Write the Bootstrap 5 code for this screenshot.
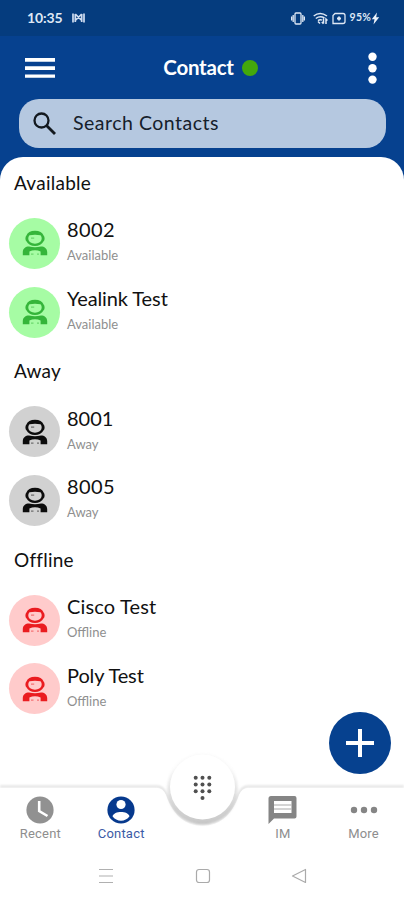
<!DOCTYPE html>
<html lang="en">
<head>
<meta charset="utf-8">
<meta name="viewport" content="width=device-width, initial-scale=1">
<title>Contact</title>
<link rel="stylesheet" href="https://cdn.jsdelivr.net/npm/bootstrap@5.3.0/dist/css/bootstrap.min.css">
<style>
body{font-family:Lato,"Open Sans",sans-serif;color:#111;background:#fff}
svg{display:block;flex:none}
.phone{width:404px;height:900px;background:#06418f}
.statusbar{height:36px;background:#053c7e;color:#dfe8f5;padding:0 24px 0 27px}
.clock{font-size:14px;letter-spacing:-.1px;font-weight:700;line-height:36px}
.batt{font-size:10.5px;font-weight:700;letter-spacing:.2px}
.topbar{height:63px;padding:0 24px 0 25px}
.title{font-size:20.5px;font-weight:700;letter-spacing:-.25px;line-height:24px;margin-top:-2px}
.title-group{margin-right:-1px}
.dot{width:16px;height:16px;background:#43a80b}
.searchbox{height:49px;margin:0 18px 9px 19px;border-radius:20px;background:#b5c8e0;padding-left:13px;gap:16px;color:#15202b}
.searchtext{font-size:19.5px;letter-spacing:.5px;margin-top:-2px}
.sheet{border-radius:23px 23px 0 0;padding-top:1px}
.group-head{height:51.2px;padding-left:14px;font-size:19px;letter-spacing:.25px;line-height:49px}
.contact{height:68.6px;padding-left:9px;gap:7px}
.avatar{width:51px;height:51px}
.avail{background:#a6fca4;color:#35b53a}
.away{background:#d1d1d1;color:#0c0c0c}
.offl{background:#ffcbcb;color:#ea1c20}
.nm{font-size:20px;line-height:26px;margin-top:-6px}
.num{letter-spacing:.4px}
.ci{letter-spacing:.15px}
.yl{letter-spacing:-.1px}
.st{font-size:13px;line-height:18px;color:#8f8f8f;margin-top:4px}
.fab{width:62px;height:62px;right:13px;top:712px;background:#06418f}
.dock{top:740px;height:160px}
.dock-shape{left:0;top:0}
.tabs{height:64px;margin-top:47px;font-family:Roboto,sans-serif;font-size:13px;letter-spacing:.2px;color:#8e8e8e}
.tab{width:20%;padding-top:9px;line-height:16px}
.tab span{margin-top:2px}
.tab svg{height:28px}
.on{color:#3c5ba6}
.sysnav{height:49px;padding:0 97px 0 98px}
</style>
<script src="https://cdn.jsdelivr.net/npm/bootstrap@5.3.0/dist/js/bootstrap.bundle.min.js"></script>
</head>
<body>
<svg width="0" height="0" class="position-absolute">
 <symbol id="person" viewBox="0 0 26 26">
  <path fill="currentColor" fill-rule="evenodd" d="M13 .8C17.500 .8 20.500 2.600 21.600 5.500Q22.600 6.500 22.600 8.500T21.600 11.200C20 14.400 17 16 13 16S6 14.400 4.400 11.200Q3.400 10.500 3.400 8.500T4.400 5.500C5.500 2.600 8.500 .8 13 .8ZM7.500 5.300C5.300 7.300 5.600 13.700 13 13.700S20.700 7.300 18.500 5.300Q13 4.300 7.500 5.300Z"/>
  <path fill="currentColor" d="M.8 25.200V22C1 18.500 3.500 16.600 7 16.600Q13 18 19 16.600C22.500 16.600 25 18.500 25.200 22V25.200H18.600V21.600Q16 20.300 13 20.300T7.400 21.600V25.200Z"/>
  <path d="M9 8.200h3.200M9 24.200h2.500M15 24.200h2" stroke="currentColor" stroke-width="1.200" opacity=".5"/>
 </symbol>
</svg>
<main class="phone position-relative overflow-hidden d-flex flex-column">
 <div class="statusbar d-flex align-items-center">
  <span class="clock">10:35</span>
  <svg class="ms-2" width="15" height="12" viewBox="0 0 15 12" fill="none" stroke="#cfdcf0" stroke-width="1.700"><path d="M2 1.500v9M13 1.500v9M4.300 2v8M10.700 2v8M4.300 2l6.400 6.500M10.700 2l-6.400 6.500"/></svg>
  <div class="d-flex align-items-center ms-auto">
   <svg width="14" height="13" viewBox="0 0 14 13" fill="none" stroke="#dfe8f5" stroke-width="1.300"><rect x="4" y="1" width="6" height="11" rx="1"/><path d="M2.200 3v7M11.800 3v7M.6 4.500v4M13.400 4.500v4"/></svg>
   <svg class="mx-1 ms-2" width="15" height="13" viewBox="0 0 15 13" fill="none" stroke="#dfe8f5" stroke-width="1.500"><path d="M.7 4Q7 -1 14 4M2.800 6.500Q7 3.500 11.500 6M5 8.700q2-1.500 4-.5M7 11.500l-2-2M10.500 6.500v5M8.800 10l1.700 1.700M13 12V7l1.500 1.500"/></svg>
   <svg width="14" height="13" viewBox="0 0 14 13" fill="none" stroke="#dfe8f5" stroke-width="1.300"><path d="M3 1.500h8Q13 1.500 13 3.500v6q0 2-2 2H1v-8Z"/><path d="M7 4.500v4M5 6.500h4" stroke-width="1.800"/></svg>
   <span class="batt ps-1">95%</span>
   <svg width="9" height="13" viewBox="0 0 9 13" fill="#eef3fb"><path d="M6 .5.8 7.300h2.700L2.500 12.500 8.200 5.300H5.200Z"/></svg>
  </div>
 </div>
 <header class="topbar d-flex align-items-center justify-content-between text-white">
  <svg width="30" height="22" viewBox="0 0 30 22" fill="#fff"><path d="M0 1h30v3.800H0zM0 9.300h30v3.800H0zM0 17.400h30v3.400H0z"/></svg>
  <div class="title-group d-flex align-items-center gap-2"><span class="title">Contact</span><span class="dot rounded-circle"></span></div>
  <svg width="15" height="32" viewBox="0 0 15 32" fill="#fff"><circle cx="7.500" cy="4.800" r="4.200"/><circle cx="7.500" cy="16.200" r="4.200"/><circle cx="7.500" cy="27.600" r="4.200"/></svg>
 </header>
 <div class="searchbox d-flex align-items-center">
  <svg width="25" height="25" viewBox="0 0 25 25" fill="none" stroke="#13191f" stroke-width="2.300"><circle cx="9.500" cy="9.500" r="7"/><path d="m14.500 14.500 8.500 8.500" stroke-width="2.800"/></svg>
  <span class="searchtext">Search Contacts</span>
 </div>
 <section class="sheet bg-white flex-grow-1">
  <div class="group-head">Available</div>
  <div class="contact d-flex align-items-center"><div class="avatar avail rounded-circle d-flex align-items-center justify-content-center"><svg width="26" height="26"><use href="#person"/></svg></div><div><div class="nm num">8002</div><div class="st">Available</div></div></div>
  <div class="contact d-flex align-items-center"><div class="avatar avail rounded-circle d-flex align-items-center justify-content-center"><svg width="26" height="26"><use href="#person"/></svg></div><div><div class="nm yl">Yealink Test</div><div class="st">Available</div></div></div>
  <div class="group-head">Away</div>
  <div class="contact d-flex align-items-center"><div class="avatar away rounded-circle d-flex align-items-center justify-content-center"><svg width="26" height="26"><use href="#person"/></svg></div><div><div class="nm">8001</div><div class="st">Away</div></div></div>
  <div class="contact d-flex align-items-center"><div class="avatar away rounded-circle d-flex align-items-center justify-content-center"><svg width="26" height="26"><use href="#person"/></svg></div><div><div class="nm num">8005</div><div class="st">Away</div></div></div>
  <div class="group-head">Offline</div>
  <div class="contact d-flex align-items-center"><div class="avatar offl rounded-circle d-flex align-items-center justify-content-center"><svg width="26" height="26"><use href="#person"/></svg></div><div><div class="nm ci">Cisco Test</div><div class="st">Offline</div></div></div>
  <div class="contact d-flex align-items-center"><div class="avatar offl rounded-circle d-flex align-items-center justify-content-center"><svg width="26" height="26"><use href="#person"/></svg></div><div><div class="nm yl">Poly Test</div><div class="st">Offline</div></div></div>
 </section>
 <div class="fab position-absolute rounded-circle d-flex align-items-center justify-content-center"><svg width="28" height="28" viewBox="0 0 28 28" stroke="#fff" stroke-width="4"><path d="M14 0v28M0 14h28"/></svg></div>
 <nav class="dock position-absolute start-0 w-100">
  <svg class="dock-shape position-absolute" width="404" height="100" viewBox="0 0 404 100">
   <defs><filter id="soft" x="-10%" y="-30%" width="120%" height="160%"><feGaussianBlur stdDeviation="1"/></filter>
   <linearGradient id="rim" x1="0" y1="0" x2="0" y2="1"><stop offset=".2" stop-color="#aaa" stop-opacity=".08"/><stop offset=".75" stop-color="#aaa" stop-opacity=".5"/><stop offset="1" stop-color="#aaa" stop-opacity=".65"/></linearGradient></defs>
   <path d="M0 46.500H157Q163 46.500 166 54C173 74 185 84 202.500 84S232 74 239 54Q242 46.500 248 46.500H404" fill="none" stroke="#dedede" stroke-width="2.200" filter="url(#soft)"/>
   <path d="M0 48H157Q163 48 166 55C173 75 185 86 202.500 86S232 75 239 55Q242 48 248 48H404V100H0Z" fill="#fff"/>
   <circle cx="202.500" cy="49" r="35.300" fill="url(#rim)" filter="url(#soft)"/>
   <circle cx="202.500" cy="47" r="32.500" fill="#fff"/>
   <g fill="#505050"><circle cx="195.700" cy="37.700" r="2"/><circle cx="202.500" cy="37.700" r="2"/><circle cx="209.300" cy="37.700" r="2"/><circle cx="195.700" cy="44.500" r="2"/><circle cx="202.500" cy="44.500" r="2"/><circle cx="209.300" cy="44.500" r="2"/><circle cx="195.700" cy="51.300" r="2"/><circle cx="202.500" cy="51.300" r="2"/><circle cx="209.300" cy="51.300" r="2"/><circle cx="202.500" cy="58" r="2"/></g>
  </svg>
  <div class="tabs d-flex position-relative">
   <div class="tab d-flex flex-column align-items-center"><svg width="28" viewBox="0 0 28 28"><circle cx="14" cy="14" r="13.600" fill="#919191"/><path d="M13.200 5v10l8.300 5" fill="none" stroke="#fff" stroke-width="2.600"/></svg><span>Recent</span></div>
   <div class="tab on d-flex flex-column align-items-center"><svg width="28" viewBox="0 0 28 28"><circle cx="14" cy="14" r="13.600" fill="#06398d"/><circle cx="14" cy="8.500" r="4.600" fill="#fff"/><path d="M5.500 20.300C7 14.500 21 14.500 22.500 20.300 18.500 26.200 9.500 26.200 5.500 20.300Z" fill="#fff"/></svg><span>Contact</span></div>
   <div class="tab"></div>
   <div class="tab d-flex flex-column align-items-center"><svg width="29" viewBox="0 0 29 28"><path d="M3 0h23.500q2 0 2 2v18.500q0 2-2 2H6L.5 28V2.500Q.5 0 3 0Z" fill="#858585"/><path d="M6 5h17.500v12H6z" fill="#fff"/><path d="M6 9h17.500M6 13h17.500" stroke="#aaa" stroke-width="1.200"/></svg><span>IM</span></div>
   <div class="tab d-flex flex-column align-items-center"><svg width="28" viewBox="0 0 28 28" fill="#858585"><circle cx="4" cy="14" r="3.200"/><circle cx="14" cy="14" r="3.200"/><circle cx="24" cy="14" r="3.200"/></svg><span>More</span></div>
  </div>
  <div class="sysnav d-flex position-relative align-items-center justify-content-between">
   <svg width="16" height="16" viewBox="0 0 16 16" stroke="#b0b0b0" stroke-width="1.200"><path d="M1 1.500h14M1 8h14M1 14.500h14"/></svg>
   <svg width="16" height="16" viewBox="0 0 16 16" fill="none" stroke="#aaa" stroke-width="1.200"><rect x="1.500" y="1.500" width="13" height="13" rx="2.500"/></svg>
   <svg width="16" height="16" viewBox="0 0 16 16" fill="none" stroke="#aaa" stroke-width="1.200" stroke-linejoin="round"><path d="M14.500 1.500v13L1.500 8Z"/></svg>
  </div>
 </nav>
</main>
</body>
</html>
